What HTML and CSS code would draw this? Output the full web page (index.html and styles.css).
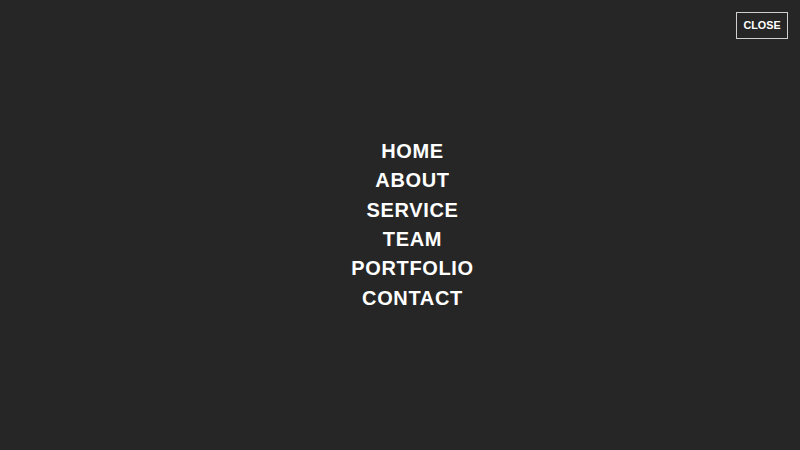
FILE: index.html
```html
<!DOCTYPE html>
<html>
<head>
<meta charset="utf-8">
<link rel="stylesheet" href="styles.css">
</head>
<body>
<div class="overlay">
  <div class="topbar"><button class="close">CLOSE</button></div>
  <nav class="menu">
    <ul>
      <li><a href="#">HOME</a></li>
      <li><a href="#">ABOUT</a></li>
      <li><a href="#">SERVICE</a></li>
      <li><a href="#">TEAM</a></li>
      <li><a href="#">PORTFOLIO</a></li>
      <li><a href="#">CONTACT</a></li>
    </ul>
  </nav>
</div>
</body>
</html>
```
FILE: styles.css
```css
html, body { margin: 0; padding: 0; height: 100%; }
body { background: #262626; font-family: "Liberation Sans", Arial, sans-serif; color: #fff; }
.overlay { position: relative; height: 100vh; display: flex; align-items: center; justify-content: center; }
.topbar { position: absolute; top: 12px; right: 12px; }
.close {
  background: transparent; color: #fff; border: 1px solid #cfcfcf;
  font-family: "Liberation Sans", Arial, sans-serif; font-weight: bold; font-size: 10.8px;
  width: 52px; height: 27px; padding: 0 0 1px; cursor: pointer;
}
.menu ul { list-style: none; margin: 0; padding: 0 0 0 25px; text-align: center; }
.menu li { height: 29.4px; }
.menu a { display: block; line-height: 29.4px; color: #fff; text-decoration: none; font-weight: bold; font-size: 20px; letter-spacing: 0.65px; }
```
